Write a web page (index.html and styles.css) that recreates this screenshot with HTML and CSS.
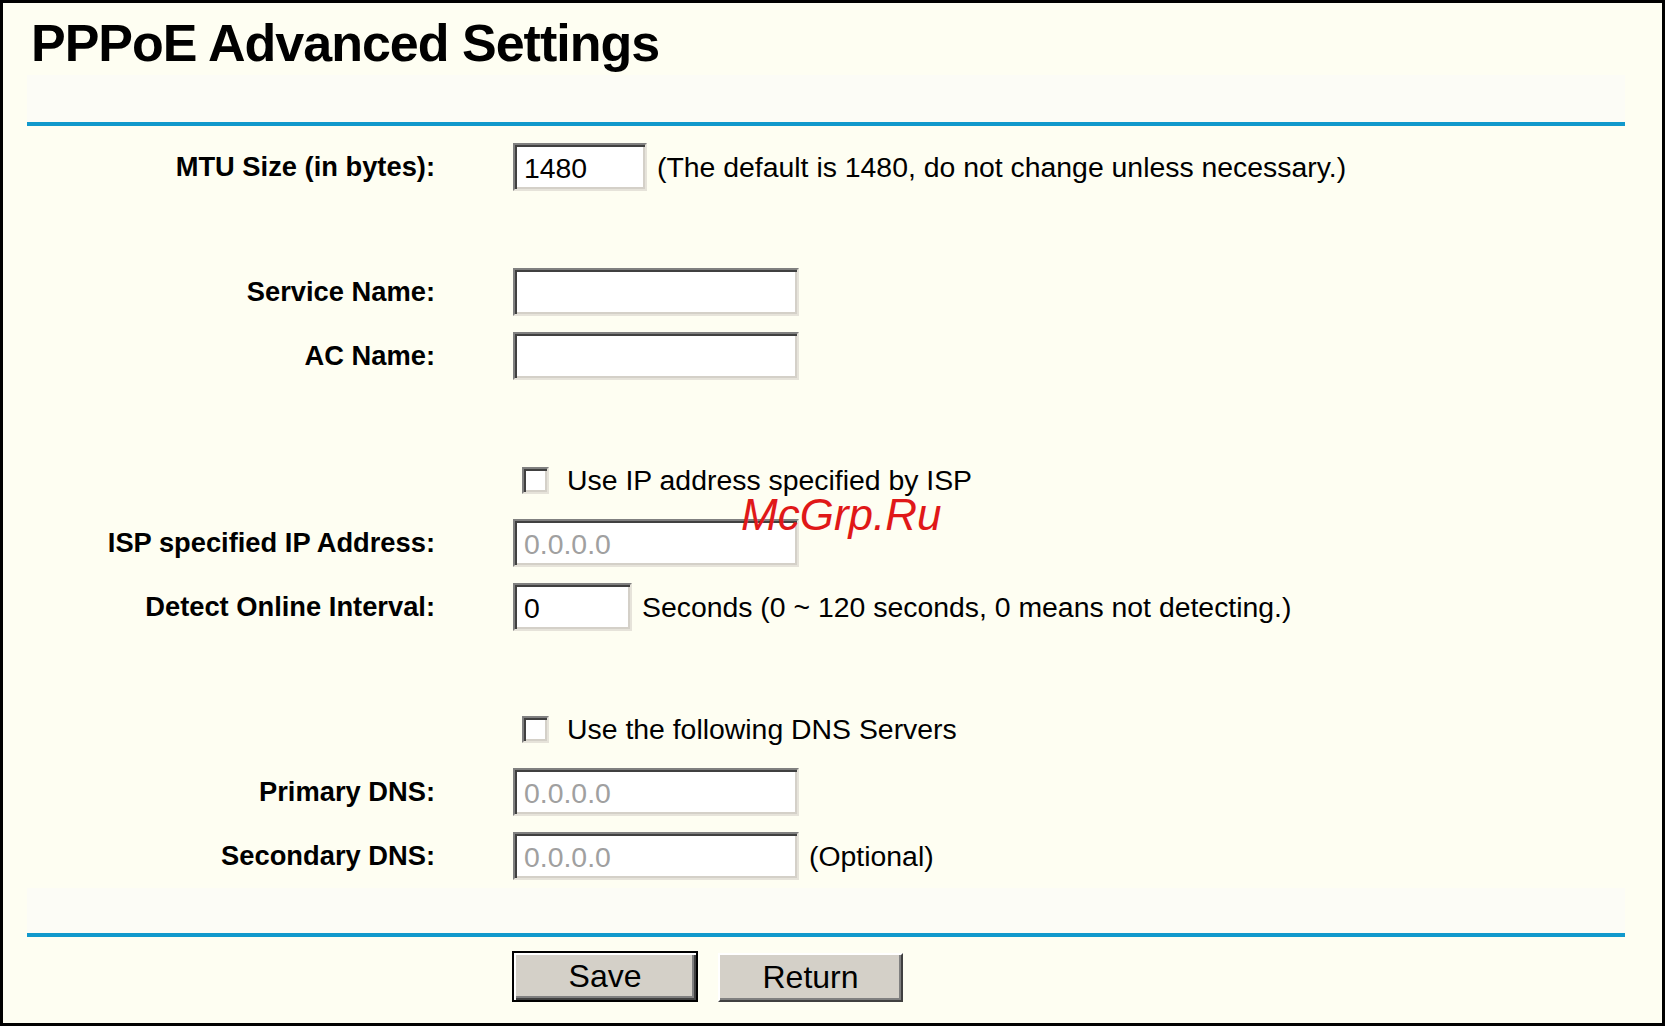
FILE: index.html
```html
<!DOCTYPE html>
<html lang="en">
<head>
    <meta charset="UTF-8">
    <title>PPPoE Advanced Settings</title>
    <link rel="stylesheet" href="styles.css">
</head>
<body>
    <div class="frame">
        <h1 class="title">PPPoE Advanced Settings</h1>
        <div class="sep top"></div>

        <div class="form">
            <div class="row first">
                <div class="label">MTU Size (in bytes):</div>
                <div class="field">
                    <input type="text" class="box mtu" value="1480">
                    <span class="note">(The default is 1480, do not change unless necessary.)</span>
                </div>
            </div>

            <div class="row spaced">
                <div class="label">Service Name:</div>
                <div class="field"><input type="text" class="box wide"></div>
            </div>
            <div class="row">
                <div class="label">AC Name:</div>
                <div class="field"><input type="text" class="box wide"></div>
            </div>

            <div class="row check-row spaced">
                <div class="label"></div>
                <div class="field">
                    <label class="check"><input type="checkbox"> Use IP address specified by ISP</label>
                </div>
            </div>
            <div class="row">
                <div class="label">ISP specified IP Address:</div>
                <div class="field"><input type="text" class="box wide" value="0.0.0.0" disabled></div>
            </div>
            <div class="row">
                <div class="label">Detect Online Interval:</div>
                <div class="field">
                    <input type="text" class="box small" value="0">
                    <span class="note">Seconds (0 ~ 120 seconds, 0 means not detecting.)</span>
                </div>
            </div>

            <div class="row check-row spaced">
                <div class="label"></div>
                <div class="field">
                    <label class="check"><input type="checkbox"> Use the following DNS Servers</label>
                </div>
            </div>
            <div class="row">
                <div class="label">Primary DNS:</div>
                <div class="field"><input type="text" class="box wide" value="0.0.0.0" disabled></div>
            </div>
            <div class="row">
                <div class="label">Secondary DNS:</div>
                <div class="field">
                    <input type="text" class="box wide" value="0.0.0.0" disabled>
                    <span class="note">(Optional)</span>
                </div>
            </div>
        </div>

        <div class="sep bottom"></div>

        <div class="buttons">
            <button class="btn default">Save</button>
            <button class="btn">Return</button>
        </div>

        <span class="watermark">McGrp.Ru</span>
    </div>
</body>
</html>
```

FILE: styles.css
```css
* {
    margin: 0;
    padding: 0;
    box-sizing: border-box;
}
body {
    background: #fefef2;
    font-family: "Liberation Sans", Arial, sans-serif;
    color: #000;
}
.frame {
    position: relative;
    width: 1665px;
    height: 1026px;
    border: 3px solid #000;
    background: #fefef2;
}
.title {
    font-size: 52px;
    font-weight: bold;
    line-height: 52px;
    letter-spacing: -1px;
    padding: 14px 0 0 28px;
}
.sep {
    margin-left: 24px;
    width: 1598px;
    background: #fcfcf6;
    border-bottom: 4px solid #1199cc;
}
.sep.top {
    height: 51px;
    margin-top: 6px;
}
.sep.bottom {
    height: 49px;
}
.form {
    padding-top: 9px;
}
.row {
    display: flex;
    align-items: center;
    height: 64px;
}
.row.spaced {
    margin-top: 61px;
}
.row.check-row {
    height: 62px;
}
.row.check-row.spaced {
    margin-top: 61px;
}
.row.check-row.spaced:nth-child(7) {
    margin-top: 59px;
}
.label {
    width: 432px;
    text-align: right;
    font-weight: bold;
    font-size: 27.3px;
}
.field {
    margin-left: 78px;
    display: flex;
    align-items: center;
    gap: 10px;
    font-size: 28.4px;
}
.box {
    height: 48px;
    font-family: "Liberation Sans", Arial, sans-serif;
    font-size: 28.4px;
    color: #000;
    background: #fff;
    padding: 2px 0 0 9px;
    border: 2px solid;
    border-color: #808080 #e6e3da #e6e3da #808080;
    box-shadow: inset 2px 2px 0 #404040, inset -2px -2px 0 #d4d0c8;
    outline: none;
}
.box:disabled {
    color: #a0a0a0;
    background: #fff;
}
.box.mtu { width: 134px; }
.box.wide { width: 286px; }
.box.small { width: 119px; }
.note {
    white-space: nowrap;
}
.check {
    display: flex;
    align-items: center;
    gap: 18px;
    margin-left: 9px;
    white-space: nowrap;
}
.check input {
    appearance: none;
    width: 27px;
    height: 27px;
    background: #fff;
    border: 2px solid;
    border-color: #808080 #e6e3da #e6e3da #808080;
    box-shadow: inset 2px 2px 0 #404040, inset -2px -2px 0 #d4d0c8;
}
.buttons {
    display: flex;
    align-items: flex-end;
    gap: 20px;
    margin: 14px 0 0 509px;
}
.btn {
    width: 186px;
    height: 51px;
    font-family: "Liberation Sans", Arial, sans-serif;
    font-size: 32px;
    color: #000;
    background: #d4d0c8;
    border: 2px solid;
    border-color: #fff #404040 #404040 #fff;
    box-shadow: inset -2px -2px 0 #808080;
}
.btn.default {
    border: 2px solid #000;
    box-shadow: inset 2px 2px 0 #fff, inset -2px -2px 0 #404040, inset -4px -4px 0 #808080;
}
.btn + .btn {
    height: 49px;
    width: 185px;
}
.watermark {
    position: absolute;
    left: 738px;
    top: 487px;
    font-size: 44px;
    font-style: italic;
    color: #e01818;
}
```
